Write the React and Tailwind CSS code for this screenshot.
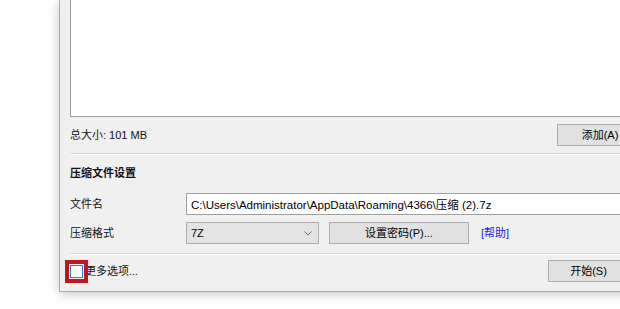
import { useState } from 'react';

const font = { fontFamily: '"Liberation Sans", "Noto Sans CJK SC", sans-serif' };

function Separator({ className = '' }) {
    return <div className={`h-[2px] border-t border-[#d5d5d5] border-b border-b-white ${className}`} />;
}

function WinButton({ children, className = '' }) {
    return (
        <button className={`h-[22px] bg-[#e1e1e1] border border-[#adadad] text-[11px] text-black flex items-center justify-center ${className}`}>
            {children}
        </button>
    );
}

export default function App() {
    const [more, setMore] = useState(false);
    const [fileName, setFileName] = useState('C:\\Users\\Administrator\\AppData\\Roaming\\4366\\压缩 (2).7z');

    return (
        <div className="w-[620px] h-[309px] bg-white overflow-hidden" style={font}>
            <div className="ml-[59px] w-[580px] h-[292px] bg-[#f0f0f0] border-l border-b border-[#a8a8a8] shadow-[0_2px_10px_rgba(0,0,0,0.22)] pl-[10px] pr-[10px] flex flex-col text-[11px] text-[#111]">
                {/* file list */}
                <div className="h-[117px] bg-white border-l border-b border-r border-[#a0a0a0]" />

                <div className="mt-[7px] h-[22px] flex items-center">
                    <span>总大小: 101 MB</span>
                    <WinButton className="ml-auto mr-[-14px] w-[86px]">添加(A)</WinButton>
                </div>

                <Separator className="mt-[7px]" />

                <div className="mt-[10px] h-[16px] leading-[16px] font-bold">压缩文件设置</div>

                <div className="mt-[12px] h-[22px] flex items-center">
                    <span className="w-[116px]">文件名</span>
                    <input
                        value={fileName}
                        onChange={(e) => setFileName(e.target.value)}
                        className="flex-1 h-[22px] bg-white border border-[#a0a0a0] px-[4px] text-[11.5px] text-black outline-none"
                    />
                </div>

                <div className="mt-[7px] h-[22px] flex items-center">
                    <span className="w-[116px]">压缩格式</span>
                    <div className="w-[133px] h-[22px] bg-[#e3e3e3] border border-[#adadad] flex items-center pl-[4px] pr-[6px]">
                        <span className="text-black">7Z</span>
                        <svg className="ml-auto" width="8" height="5" viewBox="0 0 8 5">
                            <path d="M0.5 0.5 L4 4 L7.5 0.5" fill="none" stroke="#707070" strokeWidth="1" />
                        </svg>
                    </div>
                    <WinButton className="ml-[10px] w-[140px]">设置密码(P)...</WinButton>
                    <a className="ml-[12px] text-[#2323d8]">[帮助]</a>
                </div>

                <Separator className="mt-[9px]" />

                <div className="mt-[5px] h-[22px] flex items-center">
                    <label className="flex items-center cursor-default">
                        <span className="relative w-[13px] h-[13px]">
                            <input
                                type="checkbox"
                                checked={more}
                                onChange={() => setMore(!more)}
                                className="appearance-none block w-[13px] h-[13px] bg-white border border-[#1e86e0]"
                            />
                            <span className="absolute left-[-5px] top-[-5px] w-[23px] h-[23px] border-[4px] border-[#c0161d] pointer-events-none" />
                        </span>
                        <span className="ml-[2px]">更多选项...</span>
                    </label>
                    <WinButton className="ml-auto w-[81px]">开始(S)</WinButton>
                </div>
            </div>
        </div>
    );
}
